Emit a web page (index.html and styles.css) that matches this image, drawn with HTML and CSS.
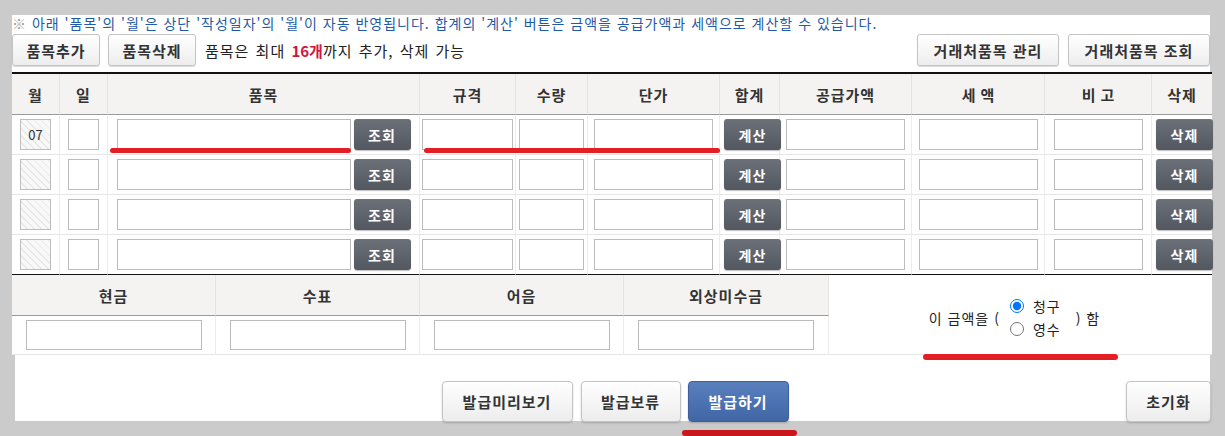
FILE: index.html
```html
<!DOCTYPE html>
<html lang="ko">
<head>
<meta charset="utf-8">
<title>품목 입력</title>
<link rel="stylesheet" href="styles.css">
</head>
<body>
<div class="page">
  <div class="top">
    <p class="notice"><span class="mark">※</span> 아래 '품목'의 '월'은 상단 '작성일자'의 '월'이 자동 반영됩니다. 합계의 '계산' 버튼은 금액을 공급가액과 세액으로 계산할 수 있습니다.</p>
    <div class="toolbar">
      <div class="tb-left">
        <button class="btn btn-sm">품목추가</button>
        <button class="btn btn-sm">품목삭제</button>
        <span class="hint">품목은 최대 <b>16개</b>까지 추가, 삭제 가능</span>
      </div>
      <div class="tb-right">
        <button class="btn btn-md">거래처품목 관리</button>
        <button class="btn btn-md">거래처품목 조회</button>
      </div>
    </div>
  </div>

  <table class="items">
    <colgroup>
      <col class="w48"><col class="w48"><col class="w312"><col class="w96"><col class="w72"><col class="w132"><col class="w60"><col class="w132"><col class="w133"><col class="w107"><col class="w60">
    </colgroup>
    <thead>
      <tr><th>월</th><th>일</th><th>품목</th><th>규격</th><th>수량</th><th>단가</th><th>합계</th><th>공급가액</th><th class="sp">세액</th><th class="sp">비고</th><th class="last">삭제</th></tr>
    </thead>
    <tbody>
      <tr>
        <td><div class="cell"><span class="mon">07</span></div></td>
        <td><div class="cell"><input class="inp w31" type="text"></div></td>
        <td><div class="cell"><input class="inp w234" type="text"><button class="dk">조회</button></div></td>
        <td><div class="cell"><input class="inp w91" type="text"></div></td>
        <td><div class="cell"><input class="inp w65" type="text"></div></td>
        <td><div class="cell"><input class="inp w119" type="text"></div></td>
        <td><div class="cell left"><button class="dk">계산</button></div></td>
        <td><div class="cell"><input class="inp w119" type="text"></div></td>
        <td><div class="cell"><input class="inp w119" type="text"></div></td>
        <td><div class="cell"><input class="inp w89" type="text"></div></td>
        <td class="last"><div class="cell left"><button class="dk">삭제</button></div></td>
      </tr>
      <tr>
        <td><div class="cell"><span class="mon"></span></div></td>
        <td><div class="cell"><input class="inp w31" type="text"></div></td>
        <td><div class="cell"><input class="inp w234" type="text"><button class="dk">조회</button></div></td>
        <td><div class="cell"><input class="inp w91" type="text"></div></td>
        <td><div class="cell"><input class="inp w65" type="text"></div></td>
        <td><div class="cell"><input class="inp w119" type="text"></div></td>
        <td><div class="cell left"><button class="dk">계산</button></div></td>
        <td><div class="cell"><input class="inp w119" type="text"></div></td>
        <td><div class="cell"><input class="inp w119" type="text"></div></td>
        <td><div class="cell"><input class="inp w89" type="text"></div></td>
        <td class="last"><div class="cell left"><button class="dk">삭제</button></div></td>
      </tr>
      <tr>
        <td><div class="cell"><span class="mon"></span></div></td>
        <td><div class="cell"><input class="inp w31" type="text"></div></td>
        <td><div class="cell"><input class="inp w234" type="text"><button class="dk">조회</button></div></td>
        <td><div class="cell"><input class="inp w91" type="text"></div></td>
        <td><div class="cell"><input class="inp w65" type="text"></div></td>
        <td><div class="cell"><input class="inp w119" type="text"></div></td>
        <td><div class="cell left"><button class="dk">계산</button></div></td>
        <td><div class="cell"><input class="inp w119" type="text"></div></td>
        <td><div class="cell"><input class="inp w119" type="text"></div></td>
        <td><div class="cell"><input class="inp w89" type="text"></div></td>
        <td class="last"><div class="cell left"><button class="dk">삭제</button></div></td>
      </tr>
      <tr class="end">
        <td><div class="cell"><span class="mon"></span></div></td>
        <td><div class="cell"><input class="inp w31" type="text"></div></td>
        <td><div class="cell"><input class="inp w234" type="text"><button class="dk">조회</button></div></td>
        <td><div class="cell"><input class="inp w91" type="text"></div></td>
        <td><div class="cell"><input class="inp w65" type="text"></div></td>
        <td><div class="cell"><input class="inp w119" type="text"></div></td>
        <td><div class="cell left"><button class="dk">계산</button></div></td>
        <td><div class="cell"><input class="inp w119" type="text"></div></td>
        <td><div class="cell"><input class="inp w119" type="text"></div></td>
        <td><div class="cell"><input class="inp w89" type="text"></div></td>
        <td class="last"><div class="cell left"><button class="dk">삭제</button></div></td>
      </tr>
    </tbody>
  </table>

  <table class="pay">
    <colgroup>
      <col class="w204"><col class="w204"><col class="w204"><col class="w205"><col class="w383">
    </colgroup>
    <tbody>
      <tr>
        <th>현금</th><th>수표</th><th>어음</th><th>외상미수금</th>
        <td class="claim" rowspan="2">
          <div class="claim-box">
            <span>이 금액을 (</span>
            <div class="radios">
              <label class="rd"><input type="radio" name="kind" checked>청구</label>
              <label class="rd"><input type="radio" name="kind">영수</label>
            </div>
            <span>) 함</span>
          </div>
        </td>
      </tr>
      <tr>
        <td><div class="pcell"><input class="inp pinp" type="text"></div></td>
        <td><div class="pcell"><input class="inp pinp" type="text"></div></td>
        <td><div class="pcell"><input class="inp pinp" type="text"></div></td>
        <td><div class="pcell"><input class="inp pinp" type="text"></div></td>
      </tr>
    </tbody>
  </table>

  <div class="actions">
    <div class="act-center">
      <button class="abtn a-preview">발급미리보기</button>
      <button class="abtn a-hold">발급보류</button>
      <button class="abtn a-issue">발급하기</button>
    </div>
    <button class="abtn a-reset">초기화</button>
  </div>
</div>

<div class="redline r1"></div>
<div class="redline r2"></div>
<div class="redline r3"></div>
<div class="redline r4"></div>
</body>
</html>
```

FILE: styles.css
```css
* { box-sizing: border-box; }

html, body {
  margin: 0;
  padding: 0;
}

body {
  background: #cbcbcb;
  width: 1225px;
  height: 436px;
  overflow: hidden;
  position: relative;
  font-family: "Noto Sans CJK KR", "Noto Sans", sans-serif;
  color: #222;
}

button, input {
  font-family: inherit;
  margin: 0;
}

.page {
  margin: 15px 0 0 12px;
  width: 1198px;
}

.top {
  background: #fff;
  height: 57px;
}

.notice {
  margin: 0;
  height: 19px;
  font-size: 14px;
  line-height: 17px;
  letter-spacing: 1px;
  color: #1f5aa6;
  white-space: nowrap;
}

.notice .mark {
  color: #9a9a9a;
}

.toolbar {
  display: flex;
  justify-content: space-between;
  align-items: center;
  height: 32px;
}

.tb-left, .tb-right {
  display: flex;
  align-items: center;
}

.tb-left { gap: 8px; }
.tb-right { gap: 9px; }

.btn {
  height: 32px;
  padding: 0;
  border: 1px solid #c4c4c4;
  border-radius: 3px;
  background: linear-gradient(#ffffff, #ededed);
  box-shadow: 0 1px 1px rgba(0, 0, 0, 0.15);
  font-size: 15px;
  font-weight: 700;
  letter-spacing: 1px;
  color: #333;
}

.btn-sm { width: 88px; }
.btn-md { width: 142px; }

.hint {
  margin-left: 1px;
  font-size: 15px;
  letter-spacing: 1px;
  word-spacing: 1px;
  color: #222;
  white-space: nowrap;
}

.hint b {
  color: #d0163c;
  font-weight: 700;
  letter-spacing: 0;
}

/* item table */
table {
  border-collapse: separate;
  border-spacing: 0;
  table-layout: fixed;
  width: 1200px;
}

.items {
  border-top: 2px solid #111;
  background: #fff;
}

.w48 { width: 48px; }
.w312 { width: 312px; }
.w96 { width: 96px; }
.w72 { width: 72px; }
.w132 { width: 132px; }
.w60 { width: 60px; }
.w133 { width: 133px; }
.w107 { width: 107px; }
.w204 { width: 204px; }
.w205 { width: 205px; }
.w383 { width: 383px; }

th {
  height: 41px;
  padding: 0;
  background: #f4f3f1;
  border-bottom: 1px solid #9a9a9a;
  border-right: 1px solid #e4e4e4;
  font-size: 15px;
  font-weight: 700;
  letter-spacing: 1px;
  color: #333;
  text-align: center;
  vertical-align: middle;
}

th.sp { letter-spacing: 5px; text-indent: 5px; }

th.last, td.last { border-right: 0; }

td {
  padding: 0;
  border-bottom: 1px solid #e6e6e6;
  border-right: 1px solid #ececec;
  vertical-align: middle;
}

tr.end td { border-bottom-color: #111; }

.cell {
  height: 39px;
  display: flex;
  align-items: center;
  justify-content: center;
  gap: 3px;
}

.cell.left {
  justify-content: flex-start;
  padding-left: 4px;
}

.inp {
  height: 31px;
  border: 1px solid #bcbcbc;
  border-radius: 0;
  background: #fff;
  padding: 0;
  outline: none;
}

.w31 { width: 31px; }
.w234 { width: 234px; }
.w91 { width: 91px; }
.w65 { width: 65px; }
.w119 { width: 119px; }
.w89 { width: 89px; }

.mon {
  width: 31px;
  height: 31px;
  border: 1px solid #bcbcbc;
  background: repeating-linear-gradient(45deg, #f8f8f8 0 4px, #e8e8e8 4px 5px);
  display: flex;
  align-items: center;
  justify-content: center;
  font-size: 13px;
  color: #333;
}

.dk {
  width: 57px;
  height: 31px;
  flex: none;
  padding: 0;
  border: 0;
  border-radius: 3px;
  background: linear-gradient(#6c7079, #53575f);
  box-shadow: 0 1px 1px rgba(0, 0, 0, 0.25);
  color: #fff;
  font-size: 14px;
  font-weight: 700;
  letter-spacing: 1px;
}

/* pay table */
.pay {
  background: #fff;
}

.pay th {
  height: 41px;
}

.pcell {
  height: 38px;
  display: flex;
  align-items: center;
  justify-content: center;
}

.pinp {
  width: 176px;
  height: 30px;
}

td.claim {
  border-right: 0;
  text-align: center;
  padding-top: 6px;
}

.claim-box {
  display: inline-flex;
  align-items: center;
  font-size: 14px;
  letter-spacing: 1px;
  color: #222;
  margin-left: -12px;
}

.radios {
  display: flex;
  flex-direction: column;
  margin: 0 15px 0 10px;
}

.rd {
  display: flex;
  align-items: center;
  height: 23px;
}

.rd input {
  width: 14px;
  height: 14px;
  margin: 0 9px 0 0;
}

/* actions */
.actions {
  margin-left: 3px;
  width: 1195px;
  height: 66px;
  background: #fff;
  display: grid;
  grid-template-columns: 1fr auto 1fr;
  align-items: start;
  padding-top: 26px;
}

.act-center {
  grid-column: 2;
  display: flex;
  gap: 7px;
  margin-left: 5px;
}

.abtn {
  height: 41px;
  padding: 0;
  border: 1px solid #c4c4c4;
  border-radius: 4px;
  background: linear-gradient(#ffffff, #ececec);
  box-shadow: 0 1px 2px rgba(0, 0, 0, 0.2);
  font-size: 15px;
  font-weight: 700;
  letter-spacing: 1px;
  color: #333;
}

.a-preview { width: 131px; margin-right: 1px; }
.a-hold { width: 100px; }
.a-issue {
  width: 101px;
  border-color: #3d609c;
  background: linear-gradient(#5a7fbd, #4066a6);
  color: #fff;
}

.a-reset {
  grid-column: 3;
  justify-self: end;
  width: 85px;
  margin-right: -1px;
}

/* annotation marks */
.redline {
  position: absolute;
  background: #e31e24;
  border-radius: 3px;
}

.r1 { left: 110px; top: 148px; width: 241px; height: 5px; }
.r2 { left: 424px; top: 148px; width: 296px; height: 5px; }
.r3 { left: 923px; top: 354px; width: 195px; height: 6px; }
.r4 { left: 682px; top: 430px; width: 115px; height: 6px; background: #c8181e; }
```
